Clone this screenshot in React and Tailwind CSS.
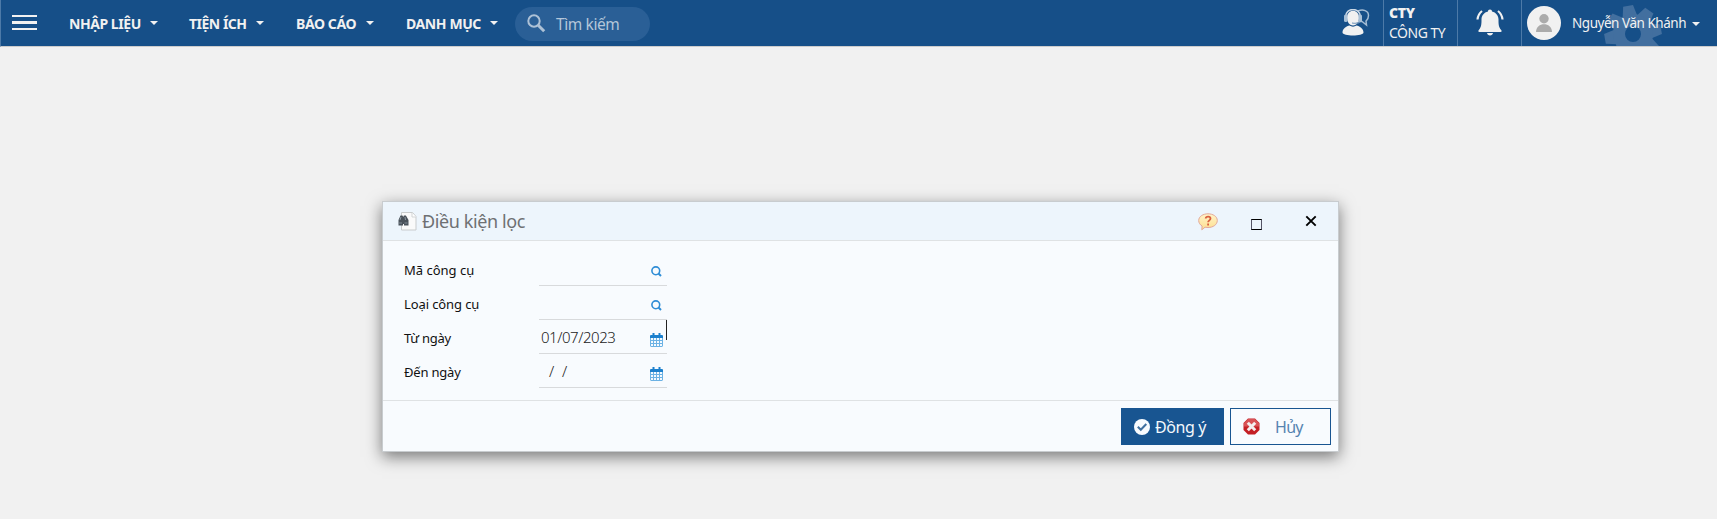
import React from "react";

function Caret({ className = "" }) {
  return (
    <svg className={className} width="8" height="4" viewBox="0 0 8 4" fill="#f1f1f1">
      <path d="M0 0h8L4 4z" />
    </svg>
  );
}

function NavItem({ label, className }) {
  return (
    <button className={"flex h-full items-center justify-between text-[14px] font-bold text-[#f1f1f1] whitespace-nowrap " + className}>
      <span>{label}</span>
      <Caret />
    </button>
  );
}

function SupportIcon() {
  return (
    <svg width="28" height="27" viewBox="0 0 28 27" fill="none">
      <path d="M16 2C21 0 26.500 1.500 26.500 6.500c0 3.500-1.500 4.500-2.500 5.500l.5 4-4.500-3.500h-7" stroke="#a3bbd3" strokeWidth="1.500" />
      <path d="M5 8.500C5-.5 17-.5 17 8.500c0 4-2 8-6 8s-6-4-6-8z" fill="#f1f1f1" />
      <path d="M3.500 8C3.500-2 18.500-2 18.500 8" stroke="#cbd8e5" strokeWidth="1.500" />
      <rect x="2" y="5.500" width="3.500" height="7.500" rx="1.500" fill="#a9c0d6" />
      <rect x="16.500" y="5.500" width="3.500" height="7.500" rx="1.500" fill="#a9c0d6" />
      <path d="M18 13c-1.500 1.500-4 1.500-8 1" stroke="#6f93b8" strokeWidth="1.200" />
      <path d="M.5 23.500c0-4 4-6.500 7-7 2 1.500 5 1.500 7 0 3 .5 7 3 7 7 0 4-21 4-21 0z" fill="#f1f1f1" />
    </svg>
  );
}

function BellIcon() {
  return (
    <svg width="28" height="27" viewBox="0 0 28 27" fill="#f1f1f1">
      <path d="M14 .5c1.300 0 2 .9 2 2 4 1 6.500 4 6.500 8 0 5 .2 7.500 2.700 10.500.8 1 .5 2-.7 2H3.500c-1.200 0-1.500-1-.7-2C5.300 18 5.500 15.500 5.500 10.500c0-4 2.500-7 6.500-8 0-1.100.7-2 2-2z" />
      <path d="M11 24h6c-.3 1.600-1.300 2.500-3 2.500s-2.700-.9-3-2.500z" />
      <path d="M6 2C3.500 4 1.800 7 1.500 10.500M22 2c2.500 2 4.200 5 4.500 8.500" fill="none" stroke="#f1f1f1" strokeWidth="2.200" />
    </svg>
  );
}

function GearIcon({ className }) {
  return (
    <svg className={className} width="58" height="58" viewBox="-29 -29 58 58">
      <g fill="#426f9f">
        {[-10, 35, 80, 125, 170, 215, 260, 305].map((a) => (
          <path key={a} transform={`rotate(${a})`} d="M-7.500-17l2.500-11.500h10L7.500-17z" />
        ))}
        <path fillRule="evenodd" d="M-20 0a20 20 0 1 0 40 0a20 20 0 1 0-40 0zM-8 0a8 8 0 1 0 16 0a8 8 0 1 0-16 0z" />
      </g>
    </svg>
  );
}

function Header() {
  return (
    <header className="flex h-[47px] items-stretch border-b border-l border-b-[#cccccc] border-l-[#4d7aa8] bg-[#164f88]">
      <button className="ml-[11px] flex w-[25px] flex-col pt-[15px]">
        <span className="block h-[2px] w-full bg-[#f1f1f1]" />
        <span className="mt-[4px] block h-[3px] w-full bg-[#f1f1f1]" />
        <span className="mt-[4px] block h-[2px] w-full bg-[#f1f1f1]" />
      </button>
      <nav className="flex">
        <NavItem label="NHẬP LIỆU" className="ml-[32px] w-[89px] tracking-[-0.450px]" />
        <NavItem label="TIỆN ÍCH" className="ml-[31px] w-[75px] tracking-[-0.500px]" />
        <NavItem label="BÁO CÁO" className="ml-[32px] w-[78px] tracking-[-0.400px]" />
        <NavItem label="DANH MỤC" className="ml-[32px] w-[92px] tracking-[-0.400px]" />
      </nav>
      <div className="mt-[7px] ml-[17px] flex h-[34px] w-[135px] rounded-full bg-[#2a5f96] pl-3">
        <svg className="mt-[7px]" width="19" height="19" viewBox="0 0 19 19" fill="none" stroke="#adc1d6">
          <circle cx="7" cy="7" r="5.700" strokeWidth="2" />
          <path d="M11.200 11.200l6 6" strokeWidth="3" />
        </svg>
        <span className="ml-[10px] text-[15.5px] leading-[34px] tracking-[-0.400px] whitespace-nowrap text-[#b4c6d9]">Tìm kiếm</span>
      </div>
      <div className="ml-auto flex">
        <div className="w-[41px] pt-[9px]"><SupportIcon /></div>
        <div className="w-[74px] border-l border-[#4d7aa8] pl-[5px] text-[14px] leading-[20px] whitespace-nowrap text-[#f1f1f1]">
          <div className="pt-[3px] font-black tracking-[-0.300px]">CTY</div>
          <div className="tracking-[-0.500px]">CÔNG TY</div>
        </div>
        <div className="w-[64px] border-l border-[#4d7aa8] pt-[9px] pl-[18px]"><BellIcon /></div>
        <div className="relative flex w-[196px] overflow-hidden border-l border-[#4d7aa8] pl-[5px]">
          <GearIcon className="absolute top-[5px] left-[82px]" />
          <svg className="mt-[6px] shrink-0" width="34" height="34" viewBox="0 0 34 34">
            <circle cx="17" cy="17" r="17" fill="#f1f1f1" />
            <circle cx="17" cy="12.700" r="4.700" fill="#ababab" />
            <path d="M9 26c0-10.500 16-10.500 16 0z" fill="#ababab" />
          </svg>
          <span className="relative ml-[11px] w-[120px] text-[13.5px] leading-[47px] tracking-[-0.460px] whitespace-nowrap text-[#f1f1f1]">Nguyễn Văn Khánh</span>
          <Caret className="relative mt-[22px] shrink-0" />
        </div>
      </div>
    </header>
  );
}

function FilterIcon() {
  return (
    <svg width="19" height="19" viewBox="0 0 19 19">
      <path d="M3.500.5h11l3.500 4v13.500h-14.500z" fill="#fafafa" stroke="#c9cccd" />
      <path d="M14 1v4h4" fill="#fff" stroke="#d2d5d6" />
      <path d="M2.500 3.500h2l.7 1.500.7-1.500h2L10.500 8v5.500h-4.500V12h-1v1.500H.5V8z" fill="#4a525a" />
      <path d="M2 8l1-3M7.500 8l-.5-3" stroke="#8c97a1" />
      <path d="M1 11h3M6.500 11h3" stroke="#7f8993" />
    </svg>
  );
}

function HelpIcon() {
  return (
    <svg width="20" height="18" viewBox="0 0 20 18">
      <defs>
        <linearGradient id="helpFill" x1="0" y1="0" x2="0" y2="1">
          <stop offset="0" stopColor="#fff3c8" />
          <stop offset="1" stopColor="#fddf90" />
        </linearGradient>
      </defs>
      <path d="M10 .8c5 0 9.300 2.700 9.300 6.700s-4 7-9.300 7c-1 0-2-.1-3-.3l-3.200 2.600.3-3.800C2 11.800.7 9.800.7 7.500.7 3.500 5 .8 10 .8z" fill="url(#helpFill)" stroke="#e2a89a" />
      <path d="M7.700 5.500c.2-2.600 4.800-2.500 4.800.1 0 1.700-2.400 1.800-2.400 3.700M10.100 10.500v2" fill="none" stroke="#d9603f" strokeWidth="1.800" />
    </svg>
  );
}

function SearchGlyph() {
  return (
    <svg width="11" height="11" viewBox="0 0 11 11" fill="none" stroke="#2f8dd6" strokeWidth="1.600">
      <circle cx="4.800" cy="4.800" r="3.900" />
      <path d="M7.500 7.500l2.500 2.500" strokeWidth="2" />
    </svg>
  );
}

function CalendarGlyph() {
  return (
    <svg width="13" height="14" viewBox="0 0 13 14">
      <path d="M1 2h11a1 1 0 0 1 1 1v2H0V3a1 1 0 0 1 1-1z" fill="#1c80cd" />
      <path d="M2.500 0h2v3h-2zM8.500 0h2v3h-2z" fill="#1c80cd" />
      <path d="M0 5h13v8l-1 1H1l-1-1z" fill="#6cb2e4" />
      <path d="M1 5h2v2H1zM4 5h2v2H4zM7 5h2v2H7zM10 5h2v2h-2zM1 8h2v2H1zM4 8h2v2H4zM7 8h2v2H7zM10 8h2v2h-2zM1 11h2v2H1zM4 11h2v2H4zM7 11h2v2H7zM10 11h2v2h-2z" fill="#f4faff" />
    </svg>
  );
}

function Field({ label, labelClass, value, valueClass = "", date, caret }) {
  return (
    <div className="flex h-[34px] pl-[21px]">
      <label className={"w-[135px] pt-[3px] text-[13px] leading-[31px] whitespace-nowrap text-[#111] " + labelClass}>{label}</label>
      <div className="relative flex w-[128px] justify-between border-b border-[#d8dadc]">
        <span className={"pt-[2px] text-[15px] leading-[30px] font-light whitespace-pre text-[#222] " + valueClass}>{value}</span>
        <span className={date ? "mt-[13px] mr-[4px]" : "mt-[14px] mr-[5px]"}>{date ? <CalendarGlyph /> : <SearchGlyph />}</span>
        {caret && <span className="absolute top-0 right-0 h-5 w-px bg-[#222]" />}
      </div>
    </div>
  );
}

function Dialog() {
  return (
    <section className="mt-[154px] ml-[382px] flex h-[251px] w-[957px] flex-col border border-[#c8cccf] bg-[#f8fbfe] shadow-[0_5px_15px_rgba(0,0,0,0.5)]">
      <div className="flex h-[39px] shrink-0 border-b border-[#dfe2e4] bg-[#edf5fc]">
        <div className="mt-[10px] ml-[15px]"><FilterIcon /></div>
        <h1 className="ml-[5px] text-[18px] leading-[39px] tracking-[-0.400px] whitespace-nowrap text-[#6e7073]">Điều kiện lọc</h1>
        <div className="mt-[11px] ml-auto w-[53px]"><HelpIcon /></div>
        <div className="mt-[17px] h-[11px] w-[11px] border border-x-[#556] border-y-black" />
        <svg className="mt-[13px] mr-[21px] ml-[43px]" width="12" height="12" viewBox="0 0 12 12" stroke="#000" strokeWidth="1.900">
          <path d="M1.300 1.300l9.400 9.400M10.700 1.300l-9.400 9.400" />
        </svg>
      </div>
      <div className="flex-1 pt-[11px]">
        <Field label="Mã công cụ" />
        <Field label="Loại công cụ" labelClass="tracking-[-0.100px]" />
        <Field label="Từ ngày" labelClass="tracking-[-0.250px]" value="01/07/2023" valueClass="pl-[2px] tracking-[-0.450px]" date caret />
        <Field label="Đến ngày" labelClass="tracking-[-0.200px]" value="/  /" valueClass="pl-[10px]" date />
      </div>
      <div className="flex h-[51px] shrink-0 justify-end gap-[6px] border-t border-[#dfe2e4] pt-[7px] pr-[7px]">
        <button className="flex h-[37px] w-[103px] items-center bg-[#185591] pl-[13px] text-[16px] text-[#f3f8fc]">
          <svg width="16" height="16" viewBox="0 0 16 16">
            <circle cx="8" cy="8" r="8" fill="#f8fbfe" />
            <path d="M3.800 7.800l3 3 5.500-5.800" fill="none" stroke="#40709f" strokeWidth="2" />
          </svg>
          <span className="ml-[5px] whitespace-nowrap tracking-[-0.400px]">Đồng ý</span>
        </button>
        <button className="flex h-[37px] w-[101px] items-center border border-[#185591] pl-[12px] text-[16px] text-[#5684b1]">
          <svg width="17" height="17" viewBox="0 0 17 17">
            <path d="M5 .5h7L16.500 5v7L12 16.500H5L.5 12V5z" fill="#c41f24" />
            <path d="M5 1h7l4 4v3.500H1V5z" fill="#d85255" />
            <path d="M4.800 4.800l7.400 7.400M12.200 4.800l-7.400 7.400" stroke="#f4eeee" strokeWidth="3" />
          </svg>
          <span className="ml-[15px] whitespace-nowrap tracking-[-0.700px]">Hủy</span>
        </button>
      </div>
    </section>
  );
}

export default function App() {
  return (
    <main className="h-[519px] w-[1717px] overflow-hidden bg-[#f1f1f1] font-['Noto_Sans','Open_Sans',sans-serif]">
      <Header />
      <Dialog />
    </main>
  );
}
